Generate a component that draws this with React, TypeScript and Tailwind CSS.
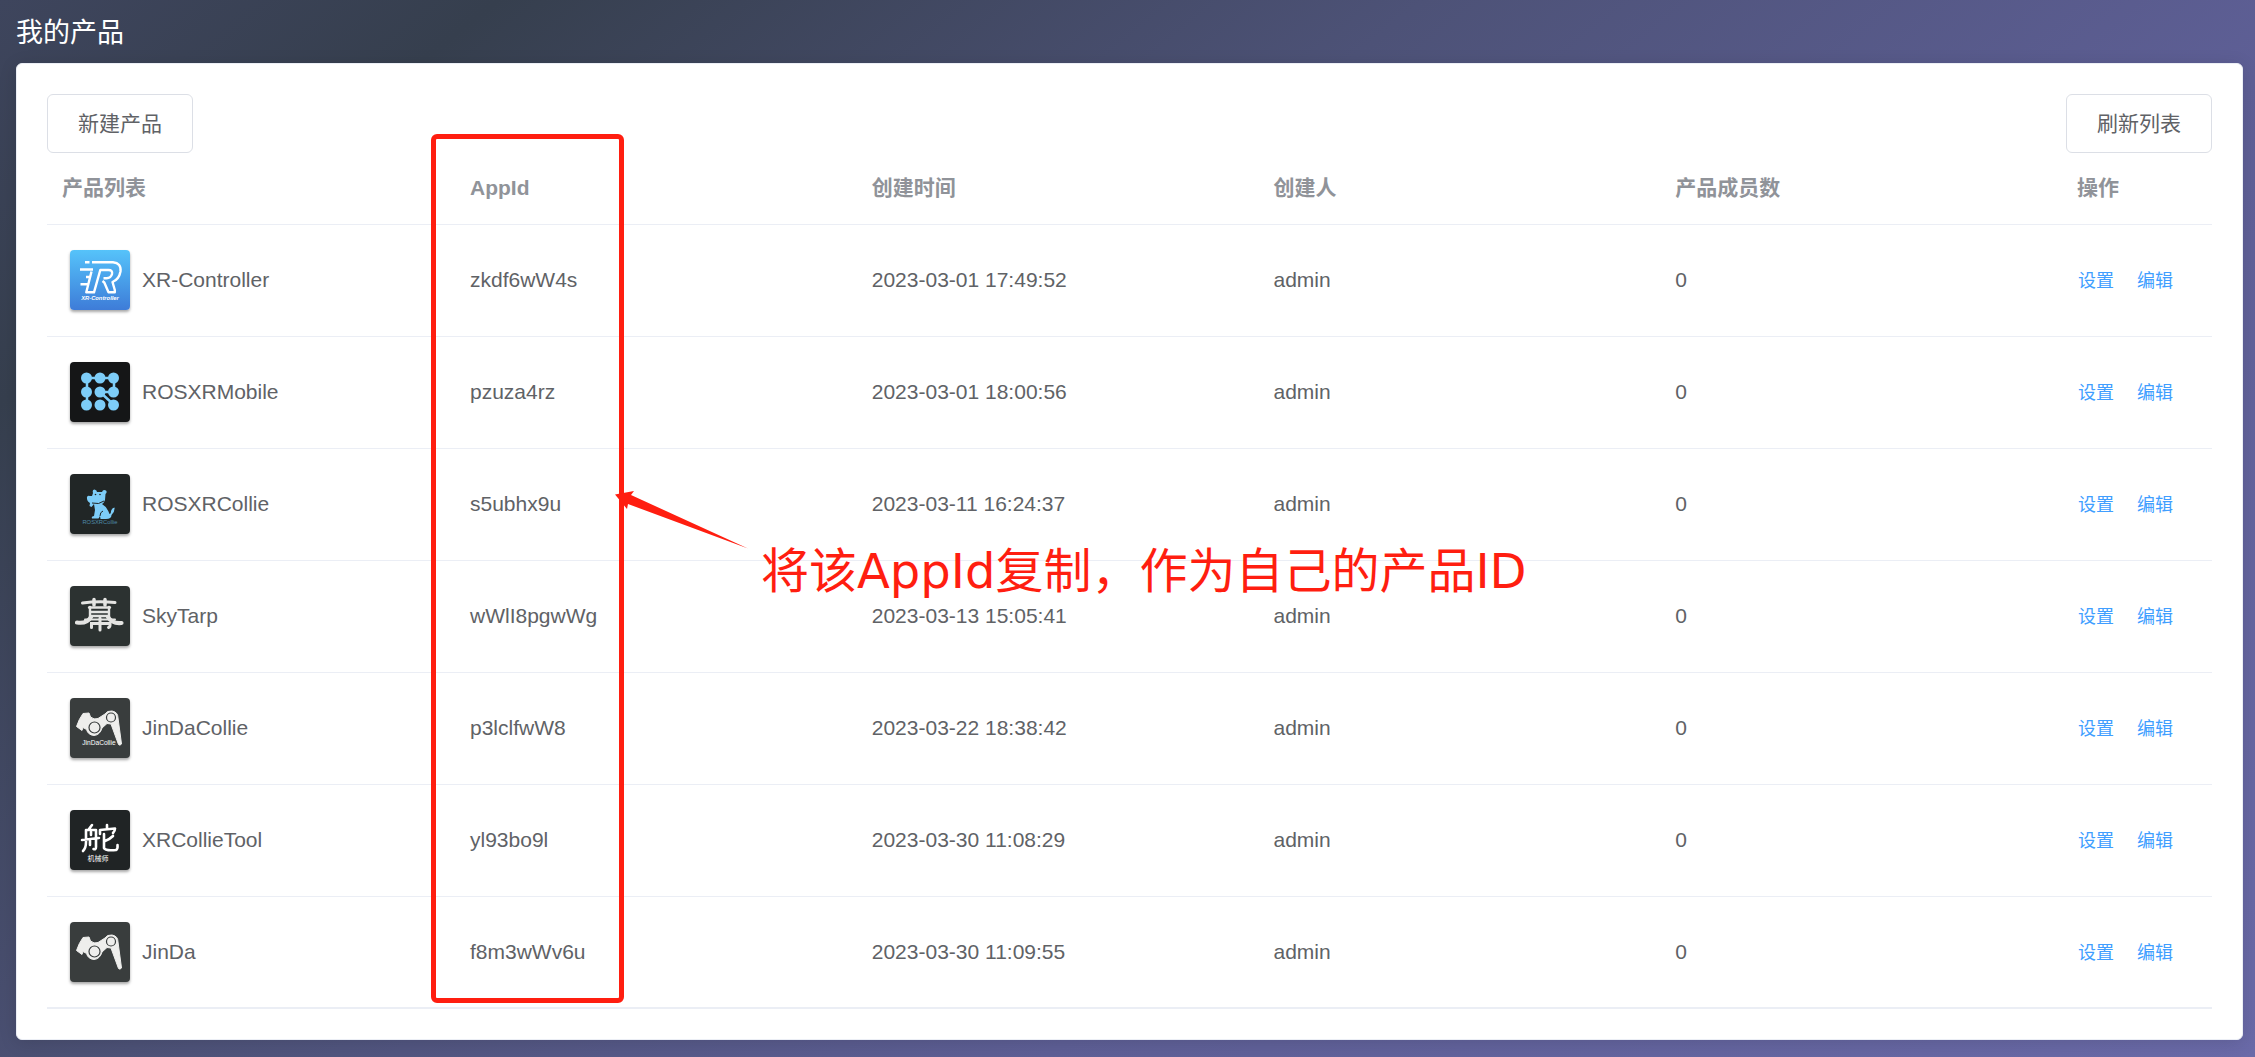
import type { ReactNode } from "react";

function Tile({ label, bg, children }: { label: string; bg: string; children: ReactNode }) {
  return (
    <svg viewBox="0 0 60 60" role="img" aria-label={label} className={`block size-[60px] shrink-0 rounded shadow-[0_2px_3px_rgba(0,0,0,0.35)] ${bg}`}>
      {children}
    </svg>
  );
}

function XRController() {
  return (
    <Tile label="XR-Controller" bg="bg-linear-to-b from-[#56c3fa] to-[#3e7cd8]">
      <g fill="none" stroke="#fff" strokeWidth="2.4" strokeLinejoin="round">
        <path d="M22 12.3 H43 Q51.5 13 50.5 21.5 Q49 29.500 42.500 32 L44.800 40 V42.300 H38.500 L34.300 32.500 L32.500 31" />
        <path d="M21.500 21.500 L16.300 42.300 H24 L30.300 20 H38.500 Q42.800 20 42 24 Q41 28 36.500 28.300 H33.500" />
        <path d="M15 12.300 H19.500 M10 19.500 H23 M16 27 H20 M10.500 34.300 H18" />
      </g>
      <text x="30" y="49.600" fill="#fff" fontSize="5.800" fontWeight="700" fontStyle="italic" textAnchor="middle">XR-Controller</text>
    </Tile>
  );
}

function RosMobile() {
  return (
    <Tile label="ROSXRMobile" bg="bg-[#151617]">
      <path stroke="#7dcdf8" strokeWidth="2.500" fill="none" d="M17 43 V16 H44 V30 M30 30 H44 M30 30 L44 43" />
      <g fill="#7dcdf8">
        {[16, 30, 43].map((y) => [16.5, 30, 43.5].map((x) => <circle key={`${x}-${y}`} cx={x} cy={y} r="5.500" />))}
      </g>
    </Tile>
  );
}

function RosCollie() {
  return (
    <Tile label="ROSXRCollie" bg="bg-[#212626]">
      <path fill="#7dcdf8" d="M23 19 Q22 15.500 24.500 15.500 Q27 16 27 18 L32 18 Q33 15 36 16.500 Q37.500 18 35.500 20 L35 26 Q34 29 32 30 Q37 33 39.500 40 Q41 40 41 37 Q42 34 44.500 33.500 Q45 38 41.500 41 Q41.500 45 36 45 H30.500 L30 42 L28.500 44.500 H22 Q21 42.500 24 42 L25 36 L24 30 L21.500 33 L19.500 32 L20 29 Q16.500 27 17 23 Q18 21 20 22 L22 22 Z" />
      <circle cx="25.500" cy="20.500" r=".8" fill="#212626" />
      <circle cx="30" cy="20.500" r=".8" fill="#212626" />
      <path d="M22 29 Q29 31 34 27 M30 42 Q30 38 33 37" stroke="#212626" fill="none" />
      <text x="30" y="49.500" fill="#4f8aa8" fontSize="5.800" textAnchor="middle">ROSXRCollie</text>
    </Tile>
  );
}

function SkyTarp() {
  return (
    <Tile label="SkyTarp" bg="bg-[#2c3231]">
      <g stroke="#e4e4e2" fill="none" strokeLinecap="round" strokeWidth="3">
        <path d="M12.500 17 Q28 15 45 16.500" />
        <path d="M24 13.500 V19 M35 13.500 V19" strokeWidth="3.500" />
        <path d="M19 21.500 H40 M20 21 V31 M39 21 V31 M20 26 H39 M20 30 H39" strokeWidth="2.400" />
        <path d="M15 33.500 H45" strokeWidth="2" />
        <path d="M21 31 Q17 38 7 36.500 M38 31 Q42 38 51.500 37" strokeWidth="4.200" />
        <path d="M21.500 41.500 V37.500 H40 Q40.500 41 38.500 41.500 M30 32 V44" />
      </g>
    </Tile>
  );
}

function Arm({ label, caption }: { label: string; caption?: string }) {
  return (
    <Tile label={label} bg="bg-[#393d3d]">
      <path fill="#eeeeec" stroke="#eeeeec" strokeLinejoin="round" d="M13 15.500 L19 15 L20 17.500 L20.500 19 Q24 22 28 20.500 L35 16 Q37 12.500 42 13 Q48 14 48 20 L51.500 46 Q50 48 48.500 46.500 L41 26 L37 25.500 L32 30 Q30 37 24 37.500 Q18 37 16.500 31.500 L13 29.500 L12 32.500 L6.500 28.500 Q9 21 13 15.500 Z" />
      <circle cx="24.500" cy="29.500" r="5.500" fill="#eeeeec" stroke="#393d3d" strokeWidth="1.200" />
      <circle cx="41" cy="19.500" r="4.500" fill="#eeeeec" stroke="#393d3d" strokeWidth="1.200" />
      {caption && <text x="29" y="47.300" fill="#fff" fontSize="6.600" textAnchor="middle">{caption}</text>}
    </Tile>
  );
}

function CollieTool() {
  return (
    <Tile label="XRCollieTool" bg="bg-[#202425]">
      <g stroke="#fff" fill="none" strokeLinecap="round" strokeLinejoin="round" strokeWidth="2.600">
        <path d="M22 15 L19 19 M16 20 V32 Q16 38 13 41 M16 20 H26 V37 Q26 40 23.500 39 M12 30 L29 28 M21 22 V25 M20 31 V35" />
        <path d="M37 15 V19 M30 24 V20 L45 18.500 Q45 21 43 23 M34 24 V38 Q35 41 46 40 Q48 39 47.500 35 M43 26 Q40 29 35 31" />
      </g>
      <text x="28" y="50.500" fill="#fff" fontSize="7" textAnchor="middle">机械师</text>
    </Tile>
  );
}

const products = [
  { icon: <XRController />, name: "XR-Controller", appId: "zkdf6wW4s", created: "2023-03-01 17:49:52" },
  { icon: <RosMobile />, name: "ROSXRMobile", appId: "pzuza4rz", created: "2023-03-01 18:00:56" },
  { icon: <RosCollie />, name: "ROSXRCollie", appId: "s5ubhx9u", created: "2023-03-11 16:24:37" },
  { icon: <SkyTarp />, name: "SkyTarp", appId: "wWlI8pgwWg", created: "2023-03-13 15:05:41" },
  { icon: <Arm label="JinDaCollie" caption="JinDaCollie" />, name: "JinDaCollie", appId: "p3lclfwW8", created: "2023-03-22 18:38:42" },
  { icon: <CollieTool />, name: "XRCollieTool", appId: "yl93bo9l", created: "2023-03-30 11:08:29" },
  { icon: <Arm label="JinDa" />, name: "JinDa", appId: "f8m3wWv6u", created: "2023-03-30 11:09:55" },
];

const headings = ["产品列表", "AppId", "创建时间", "创建人", "产品成员数", "操作"];

function PlainButton({ children }: { children: ReactNode }) {
  return (
    <button type="button" className="rounded-md border border-[#dcdfe6] bg-white px-[30px] py-4 text-[21px] leading-[25px] text-[#606266]">
      {children}
    </button>
  );
}

export default function App() {
  return (
    <div className="min-h-screen bg-linear-[141deg,#3e455d_0%,#363f4e_14%,#4d5277_40%,#5e5f96_66%,#6a6aa8_100%] pr-3 pb-4 pl-4 font-['Liberation_Sans','Noto_Sans_CJK_SC',sans-serif]">
      <h1 className="pt-[13px] pb-2.5 text-[27px] leading-10 text-white">我的产品</h1>
      <main className="relative rounded-md border border-[#ebeef5] bg-white p-[30px] shadow-[0_3px_18px_rgba(0,0,0,0.12)]">
        <div className="flex justify-between">
          <PlainButton>新建产品</PlainButton>
          <PlainButton>刷新列表</PlainButton>
        </div>
        <table className="w-full table-fixed text-left text-[21px] leading-8 text-[#606266]">
          <colgroup>
            <col className="w-[408px]" />
            <col />
            <col />
            <col />
            <col />
            <col className="w-[150px]" />
          </colgroup>
          <thead>
            <tr className="h-[71px] border-b border-[#ebeef5] text-[#909399]">
              {headings.map((h) => (
                <th key={h} scope="col" className="px-[15px] font-bold">{h}</th>
              ))}
            </tr>
          </thead>
          <tbody>
            {products.map((p) => (
              <tr key={p.name} className="h-28 border-b border-[#ebeef5] last:border-b-2">
                <td className="pl-[23px]">
                  <div className="flex items-center gap-3">
                    {p.icon}
                    {p.name}
                  </div>
                </td>
                <td className="px-[15px]">{p.appId}</td>
                <td className="px-[15px]">{p.created}</td>
                <td className="px-[15px]">admin</td>
                <td className="px-[15px]">0</td>
                <td className="pt-0.5 pl-4">
                  <div className="flex gap-[23px] text-lg text-[#409eff]">
                    <button type="button">设置</button>
                    <button type="button">编辑</button>
                  </div>
                </td>
              </tr>
            ))}
          </tbody>
        </table>

        <div className="pointer-events-none absolute top-[70px] left-[414px] h-[869px] w-[193px] rounded-md border-5 border-[#ff1e10]" />
        <svg viewBox="0 0 134 60" className="pointer-events-none absolute top-[426px] left-[597px] h-[60px] w-[134px]" aria-hidden="true">
          <path fill="#ff1e10" d="M1 4.500 L20 1 L17 5 L134 58.500 L14 14 L13 19 Z" />
        </svg>
        <p className="pointer-events-none absolute top-[473px] left-[744px] font-['DejaVu_Sans','Noto_Sans_CJK_SC',sans-serif] text-5xl leading-[68px] whitespace-nowrap text-[#ff1e10]">
          将该AppId复制，作为自己的产品ID
        </p>
      </main>
    </div>
  );
}
